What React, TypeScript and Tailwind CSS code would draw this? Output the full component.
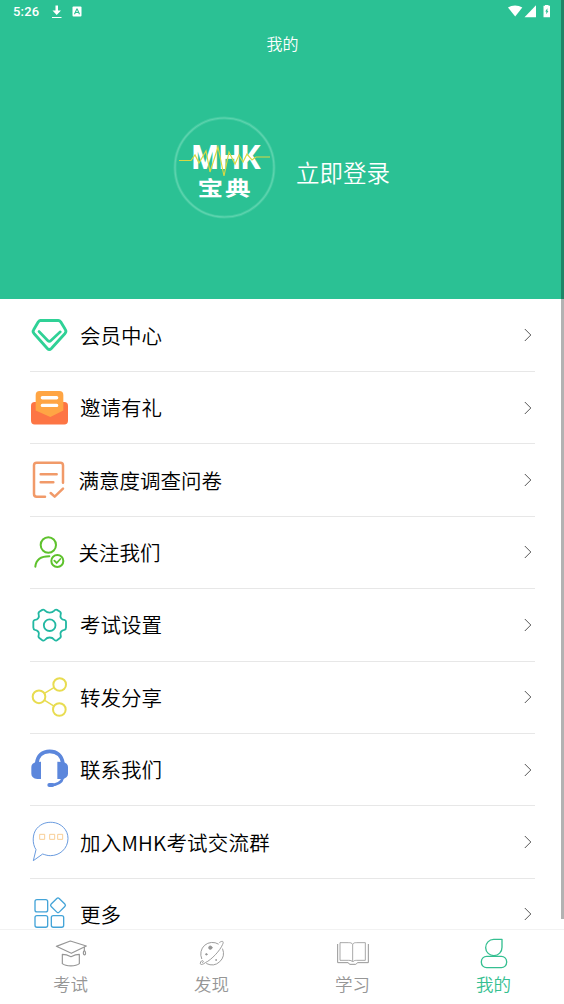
import React from 'react';

const ICON_CLASS = 'block h-[48px] w-[42px] shrink-0';

const DiamondIcon = () => (
  <svg className={ICON_CLASS} viewBox="27 33.6 126 144" fill="none" stroke="#2fd196" strokeLinejoin="round" strokeLinecap="round">
    <path d="M61 62H115Q119 62 122 66L136 89Q140 95 135 101L94 146Q88 152 82 146L42 101Q37 95 41 90L55 66Q58 62 61 62Z" strokeWidth="8.5" />
    <path d="M57 95L83 122Q88 127 93 122L121 96" strokeWidth="8" />
  </svg>
);

const InviteIcon = () => (
  <svg className={ICON_CLASS} viewBox="27 250.8 126 144" fill="none">
    <rect x="33" y="305" width="111" height="67" rx="11" fill="#fd7544" />
    <path d="M59 272H118Q130 272 130 284V330L91 350L47 330V284Q47 272 59 272Z" fill="#ffa544" />
    <path d="M67 292H110M67 315H110" stroke="#fff" strokeWidth="10" strokeLinecap="round" />
  </svg>
);

const SurveyIcon = () => (
  <svg className={ICON_CLASS} viewBox="27 18 126 144" fill="none" stroke="#f19a69" strokeWidth="7.5" strokeLinecap="round" strokeLinejoin="round">
    <path d="M75 140H50Q42 140 42 132V46Q42 38 50 38H121Q129 38 129 46V98" />
    <path d="M62 73H110M62 97H100M92 129L104 140L129 116" />
  </svg>
);

const FollowIcon = () => (
  <svg className={ICON_CLASS} viewBox="27 235 126 144" fill="none" stroke="#5ec22d" strokeWidth="6" strokeLinecap="round">
    <ellipse cx="85" cy="286" rx="23" ry="23" />
    <path d="M46 351C48 331 62 320 88 320" />
    <circle cx="112" cy="334" r="18" />
    <path d="M103 333L110 340L121 328" strokeWidth="5.5" />
  </svg>
);

const GearIcon = () => (
  <svg className={ICON_CLASS} viewBox="27 32.4 126 144" fill="none" stroke="#22b8a2" strokeWidth="5.5" strokeLinejoin="round">
    <path d="M67 59Q72 57 76 62C82 69 96 69 102 62Q106 57 111 59L119 64Q124 67 122 73C119 82 125 89 133 89Q138 90 138 95V112Q138 118 133 119C125 120 119 127 122 135Q124 141 119 144L111 150Q106 153 102 148C96 140 82 140 76 148Q72 153 67 150L59 144Q54 141 56 135C59 127 53 120 45 119Q40 118 40 112V95Q40 90 45 89C53 89 59 82 56 73Q54 67 59 64Z" />
    <circle cx="89" cy="105" r="17.5" />
  </svg>
);

const ShareIcon = () => (
  <svg className={ICON_CLASS} viewBox="27 249.6 126 144" fill="none" stroke="#e8dc50" strokeWidth="6">
    <circle cx="57" cy="321" r="19" />
    <circle cx="119" cy="284" r="19" />
    <circle cx="118" cy="359" r="19" />
    <path d="M73 311L103 293M73 331L102 349" strokeWidth="4.5" />
  </svg>
);

const HeadsetIcon = () => (
  <svg className={ICON_CLASS} viewBox="27 33.8 126 144" fill="none" stroke="#5c87dc">
    <path d="M50 87C52 62 68 50 89 50S126 62 129 87" strokeWidth="11" />
    <path d="M63 81V133H52Q34 130 34 117V97Q34 85 50 82ZM112 81V133H125Q144 130 144 117V97Q144 85 128 82Z" fill="#5c87dc" stroke="none" />
    <path d="M129 128C125 145 108 151 89 151" strokeWidth="8" />
    <path d="M88 151H97" strokeWidth="12" strokeLinecap="round" />
  </svg>
);

const ChatIcon = () => (
  <svg className={ICON_CLASS} viewBox="27 249 126 144" fill="none" strokeWidth="2.8" strokeLinejoin="round">
    <path d="M40 377L48 344C36 326 37 297 50 281C64 265 80 261 97 262C124 264 144 285 144 310C144 341 119 362 91 362C82 362 74 359 68 357Z" stroke="#5f93dc" />
    <path d="M59 298H74V313H59ZM89 298H104V313H89ZM113 298H128V313H113Z" stroke="#f7ca8e" />
  </svg>
);

const MoreIcon = () => (
  <svg className={ICON_CLASS} viewBox="27 48.2 126 144" fill="none" stroke="#44a4d8" strokeWidth="4">
    <rect x="45" y="77" width="38" height="37" rx="6" />
    <rect x="45" y="125" width="38" height="35" rx="6" />
    <rect x="94" y="125" width="37" height="35" rx="6" />
    <rect x="97" y="77" width="34" height="34" rx="5" transform="rotate(45 114 94)" />
  </svg>
);

const ExamIcon = () => (
  <svg className="block h-[34px] w-[40px]" viewBox="90 186 120 102" fill="none" stroke="#969696" strokeWidth="3.5" strokeLinejoin="round" strokeLinecap="round">
    <path d="M106 214L148 198L196 213L151 235Z" />
    <path d="M124 238V266C135 275 164 275 175 266V238C164 238 158 241 150 245C142 241 135 238 124 238ZM190 216V226M190 226C185 231 187 239 190 240C195 239 195 231 190 226Z" />
  </svg>
);

const DiscoverIcon = () => (
  <svg className="block h-[34px] w-[40px]" viewBox="514 186 120 102" fill="none" stroke="#969696" strokeWidth="2.8" strokeLinecap="round">
    <path d="M593 207A35 35 0 0 0 543 251M558 266A35 35 0 0 0 606 222" />
    <path d="M597 202C606 196 610 199 606 208C598 227 573 254 554 263C545 270 538 270 539 264C540 257 547 255 548 259C549 262 545 264 544 262" />
    <circle cx="569" cy="218" r="5" fill="#969696" />
    <circle cx="557" cy="238" r="2.2" fill="#969696" />
    <circle cx="586" cy="255" r="1.2" />
  </svg>
);

const StudyIcon = () => (
  <svg className="block h-[34px] w-[40px]" viewBox="98 186 120 102" fill="none" stroke="#969696" strokeWidth="2.5" strokeLinejoin="round">
    <path d="M157 208C154 203 149 203 145 203H119V256H145C151 256 155 257 157 261C160 257 163 256 169 256H195V203H169C164 203 160 203 157 208ZM157 208V259" />
    <path d="M112 207V263H143C147 264 145 268 149 268H166C169 268 168 264 172 263H204V207" strokeWidth="3" />
  </svg>
);

const MineIcon = () => (
  <svg className="block h-[34px] w-[40px]" viewBox="521 186 120 102" fill="none" stroke="#35bf91" strokeWidth="4" strokeLinejoin="round">
    <path d="M580 193H605V217A24.5 24.5 0 1 1 580 193Z" />
    <rect x="543" y="244" width="76" height="34" rx="16" />
  </svg>
);

const menuItems = [
  { label: '会员中心', Icon: DiamondIcon, pad: 'pl-[9px]' },
  { label: '邀请有礼', Icon: InviteIcon, pad: 'pl-[9px]' },
  { label: '满意度调查问卷', Icon: SurveyIcon, pad: 'pl-[7.5px]' },
  { label: '关注我们', Icon: FollowIcon, pad: 'pl-[7.5px]' },
  { label: '考试设置', Icon: GearIcon, pad: 'pl-[9px]' },
  { label: '转发分享', Icon: ShareIcon, pad: 'pl-[9px]' },
  { label: '联系我们', Icon: HeadsetIcon, pad: 'pl-[9px]' },
  { label: '加入MHK考试交流群', Icon: ChatIcon, pad: 'pl-[9px] tracking-[0.2px]' },
  { label: '更多', Icon: MoreIcon, pad: 'pl-[9px]' },
];

const tabs = [
  { label: '考试', Icon: ExamIcon, active: false },
  { label: '发现', Icon: DiscoverIcon, active: false },
  { label: '学习', Icon: StudyIcon, active: false },
  { label: '我的', Icon: MineIcon, active: true },
];

const StatusBar = () => (
  <div className="flex h-[23px] items-center pl-[13px] pr-[13px]">
    <span className="w-[38px] font-['Roboto',sans-serif] text-[13px] font-medium leading-none tracking-[0.2px]">5:26</span>
    <svg className="h-[14px] w-[12px]" viewBox="0 0 12 14" fill="#fff">
      <path d="M4.5 0.5H7V5.5H10L5.7 10L1.5 5.5H4.5ZM1 12H10.5V13H1Z" />
    </svg>
    <svg className="ml-[9px] h-[11px] w-[10px]" viewBox="0 0 10 11">
      <rect x="0.5" y="0.5" width="9" height="10" rx="1" fill="#fff" />
      <path d="M2.5 8.3L4.8 3H5.2L7.5 8.3M3.5 6.5H6.5" fill="none" stroke="#2bc194" strokeWidth="1.1" />
    </svg>
    <svg className="ml-auto h-[14px] w-[44px]" viewBox="507 4.7 44 14" fill="#fff">
      <path d="M508 7.2C512 4.4 518 4.4 522.3 7.2L515.2 16.2Z" />
      <path d="M536 5V17H524.5Z" />
      <path fillRule="evenodd" d="M545 4.5H548.5V5.5H550V17H543.5V5.5H545ZM547.4 8L545.2 11.3H546.3V14L548.4 10.7H547.4Z" />
    </svg>
  </div>
);

const Logo = () => (
  <svg className="block h-[104px] w-[104px]" viewBox="0 0 104 104">
    <circle cx="52.5" cy="52.5" r="49.5" fill="none" stroke="#42caa0" strokeWidth="3" />
    <circle cx="52.5" cy="52.5" r="49.5" fill="none" stroke="#5dd3ae" strokeWidth="1.2" />
    <text x="19.5" y="53.5" textLength="69" lengthAdjust="spacingAndGlyphs" fill="#fff" fontFamily="Roboto, sans-serif" fontWeight="700" fontSize="34">MHK</text>
    <path d="M7 45.5H19L23 40L27 48L34 36L38 57L46 32L52 61L57 37L63 49L67 40L71 47L75 39L80 45L84 42H98" fill="none" stroke="#d9d843" strokeWidth="1.2" />
    <g transform="translate(25.5 80.5) scale(1.28 1)">
      <text x="0" y="0" textLength="41.5" fill="#fff" fontFamily="'Noto Sans CJK SC', sans-serif" fontWeight="700" fontSize="20">宝典</text>
    </g>
  </svg>
);

const App: React.FC = () => {
  return (
    <div className="relative flex h-[1004px] w-[564px] flex-col overflow-hidden bg-white font-['Noto_Sans_CJK_SC',sans-serif]">
      <header className="h-[299px] shrink-0 bg-[#2bc194] text-white">
        <StatusBar />
        <h1 className="mt-[8px] pl-px text-center text-[16px] font-[350] leading-[24px]">我的</h1>
        <div className="mt-[60px] flex items-center pl-[172px]">
          <Logo />
          <span className="ml-[20px] mt-[10px] text-[23.5px] font-[350] leading-[36px]">立即登录</span>
        </div>
      </header>

      {/* Menu */}
      <main className="min-h-0 flex-1 overflow-hidden pt-[0.6px]">
        {menuItems.map(({ label, Icon, pad }) => (
          <div key={label} className="ml-[30px] mr-[29px] flex h-[72.4px] items-center border-b border-[#e7e7e7]">
            <div className="-ml-px shrink-0">
              <Icon />
            </div>
            <span className={`flex-1 pb-[1px] text-[20.5px] font-[350] leading-[30px] text-black ${pad}`}>{label}</span>
            <svg className="mr-[3px] h-[14px] w-[8px]" viewBox="0 0 8 14" fill="none" stroke="#555" strokeWidth="1">
              <path d="M0.8 1L6.8 7L0.8 13" />
            </svg>
          </div>
        ))}
      </main>

      {/* Bottom tabs */}
      <nav className="flex h-[75px] shrink-0 border-t border-[#f2f2f2] bg-white">
        {tabs.map(({ label, Icon, active }) => (
          <div key={label} className={`flex flex-1 flex-col items-center pt-[7px] ${active ? 'text-[#35bf91]' : 'text-[#969696]'}`}>
            <Icon />
            <span className="text-[17.5px] font-[350] leading-[26px]">{label}</span>
          </div>
        ))}
      </nav>

      {/* Scrollbar */}
      <div className="absolute right-0 top-0 h-[919px] w-[3px] bg-black/30"></div>
    </div>
  );
};

export default App;
